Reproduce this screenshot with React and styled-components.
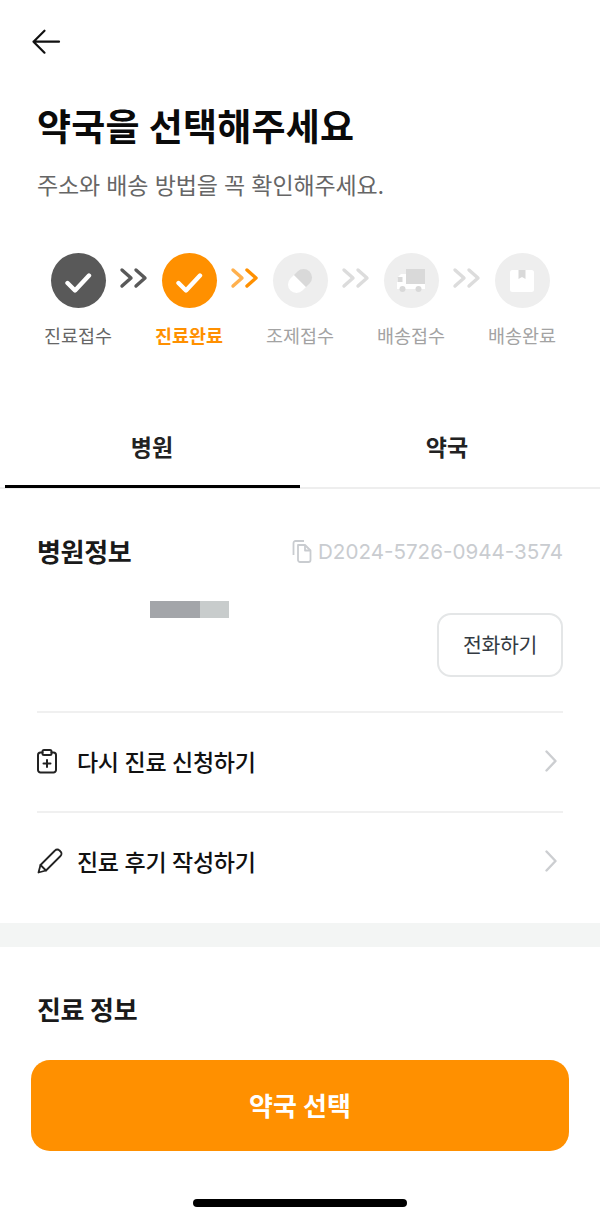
import React from 'react';
import styled, { createGlobalStyle } from 'styled-components';

const GlobalStyle = createGlobalStyle`
  html, body {
    margin: 0;
    padding: 0;
    background: #fff;
  }
  * {
    box-sizing: border-box;
  }
`;

const Page = styled.div`
  width: 600px;
  height: 1218px;
  overflow: hidden;
  display: flex;
  flex-direction: column;
  background: #fff;
  color: #111;
  font-family: Inter, 'Noto Sans CJK KR', sans-serif;
`;

const BackButton = styled.div`
  height: 103px;
  padding: 26px 0 0 31px;
`;

const Header = styled.div`
  padding: 0 37px;
  height: 131px;
`;

const Title = styled.h1`
  margin: 0;
  font-size: 37px;
  line-height: 50px;
  font-weight: 700;
  letter-spacing: 0.2px;
  color: #0a0a0a;
`;

const Subtitle = styled.p`
  margin: 17px 0 0;
  font-size: 23px;
  line-height: 32px;
  font-weight: 400;
  letter-spacing: -0.15px;
  color: #666;
`;

const Stepper = styled.div`
  height: 170px;
  padding-top: 19px;
  display: flex;
  justify-content: center;
`;

const Step = styled.div`
  width: 111px;
  display: flex;
  flex-direction: column;
  align-items: center;
  position: relative;
`;

const Circle = styled.div`
  width: 55px;
  height: 55px;
  border-radius: 50%;
  background: ${(p) => p.$bg};
  display: flex;
  align-items: center;
  justify-content: center;
`;

const StepLabel = styled.span`
  margin-top: 15px;
  font-size: 18.5px;
  line-height: 26px;
  letter-spacing: 0;
  white-space: nowrap;
  font-weight: ${(p) => (p.$active ? 700 : 400)};
  color: ${(p) => p.$color};
`;

const ArrowSlot = styled.div`
  position: absolute;
  left: 96px;
  top: 13px;
`;

const Tabs = styled.div`
  display: flex;
  height: 85px;
  padding: 0 5px;
  border-bottom: 2px solid #eeeeee;
`;

const Tab = styled.div`
  flex: 1;
  display: flex;
  align-items: center;
  justify-content: center;
  padding: 2px 1px 0 0;
  margin-bottom: -1px;
  font-size: 23px;
  font-weight: 700;
  color: #222;
  border-bottom: 3px solid ${(p) => (p.$active ? '#000' : 'transparent')};
`;

const HospitalSection = styled.section`
  padding: 0 37px;
  display: flex;
  flex-direction: column;
`;

const SectionHead = styled.div`
  height: 124px;
  padding-top: 44px;
  display: flex;
  justify-content: space-between;
  align-items: flex-start;
`;

const SectionTitle = styled.h2`
  margin: 0;
  font-size: 26px;
  line-height: 36px;
  font-weight: 700;
  letter-spacing: -0.3px;
  color: #1a1a1a;
`;

const HeadTitle = styled(SectionTitle)`
  margin-top: 2px;
`;

const CodeWrap = styled.div`
  display: flex;
  align-items: center;
  gap: 6px;
  height: 36px;
  font-size: 20.6px;
  color: #c9ccd0;
`;

const InfoBlock = styled.div`
  height: 98px;
  display: flex;
  justify-content: space-between;
  align-items: flex-start;
  position: relative;
`;

const Redacted = styled.div`
  display: flex;
  margin: -12px 0 0 113px;
  height: 17px;
`;

const RedactedBar = styled.div`
  width: ${(p) => p.$w}px;
  background: ${(p) => p.$bg};
`;

const CallButton = styled.div`
  width: 126px;
  height: 64px;
  padding-bottom: 2px;
  border: 2px solid #e4e6e7;
  border-radius: 14px;
  display: flex;
  align-items: center;
  justify-content: center;
  font-size: 20.5px;
  color: #333a42;
  letter-spacing: -0.3px;
`;

const LinkRow = styled.div`
  height: 100px;
  display: flex;
  align-items: center;
  padding: 0 6px 2px 0;
  border-top: 2px solid #f0f0f0;
`;

const RowIcon = styled.div`
  width: 40px;
  display: flex;
  align-items: center;
`;

const RowText = styled.span`
  flex: 1;
  font-size: 23px;
  font-weight: 500;
  letter-spacing: -0.3px;
  color: #111;
`;

const GapBar = styled.div`
  height: 24px;
  margin-top: 12px;
  background: #f3f5f4;
`;

const InfoSection = styled.section`
  flex: 1;
  padding: 46px 37px 0;
`;

const Footer = styled.div`
  padding: 0 31px;
`;

const PrimaryButton = styled.div`
  height: 91px;
  border-radius: 19px;
  background: #ff9000;
  color: #fff;
  font-size: 26px;
  font-weight: 700;
  padding-bottom: 3px;
  display: flex;
  align-items: center;
  justify-content: center;
`;

const HomeBar = styled.div`
  width: 214px;
  height: 8px;
  margin: 48px auto 11px;
  border-radius: 4px;
  background: #000;
`;

const Check = () => (
  <svg width="28" height="26" viewBox="0 0 28 26" fill="none">
    <path d="M3.5 15L11 22.5L25 7.5" stroke="#fff" strokeWidth="4.4" strokeLinecap="round" strokeLinejoin="round" />
  </svg>
);

const Pill = () => (
  <svg width="30" height="30" viewBox="0 0 30 30">
    <g transform="rotate(-45 15 15)">
      <path d="M15 6.5H10a8.5 8.5 0 0 0 0 17H15z" fill="#fff" />
      <path d="M15 6.5H20a8.5 8.5 0 0 1 0 17H15z" fill="#d9d9d9" />
    </g>
  </svg>
);

const Truck = () => (
  <svg width="28" height="24" viewBox="0 0 28 24">
    <rect x="9" y="0" width="19" height="15" fill="#d9d9d9" />
    <path d="M0 9L4 5H9V15H28V20H0z" fill="#fff" />
    <rect x="0.5" y="8" width="5" height="5" fill="#d9d9d9" />
    <circle cx="5.5" cy="20" r="3" fill="#d9d9d9" />
    <circle cx="21.5" cy="20" r="3" fill="#d9d9d9" />
  </svg>
);

const Box = () => (
  <svg width="24" height="22" viewBox="0 0 24 22">
    <rect width="24" height="22" rx="2.5" fill="#fff" />
    <path d="M8.5 0H15.5V9L12 7L8.5 9z" fill="#d9d9d9" />
  </svg>
);

const Chevrons = ({ first, second }) => (
  <svg width="30" height="24" viewBox="0 0 30 24" fill="none" strokeWidth="3.4" strokeLinecap="round" strokeLinejoin="round">
    <path d="M3 4L12 12L3 20" stroke={first} />
    <path d="M17 4L26 12L17 20" stroke={second} />
  </svg>
);

const BackArrow = () => (
  <svg width="30" height="30" viewBox="0 0 30 30" fill="none" stroke="#111" strokeWidth="2.2" strokeLinecap="round" strokeLinejoin="round">
    <path d="M2.5 15.7H28M13.5 4.7L2.5 15.7L13.5 26.7" />
  </svg>
);

const CopyIcon = () => (
  <svg width="20" height="23" viewBox="0 0 20 23" fill="none" stroke="#c9ccd0" strokeWidth="1.8" strokeLinejoin="round">
    <path d="M1.5 15V3a2 2 0 0 1 2-2H12" />
    <path d="M6 5h7l5.5 5.5V20a2 2 0 0 1-2 2H8a2 2 0 0 1-2-2z" />
    <path d="M13 5v5.5h5.5" />
  </svg>
);

const ClipboardPlus = () => (
  <svg width="20" height="25" viewBox="0 0 20 25" fill="none" stroke="#222" strokeWidth="2" strokeLinecap="round" strokeLinejoin="round">
    <path d="M5.5 3.5H3.5a2.5 2.5 0 0 0-2.5 2.5V21a2.5 2.5 0 0 0 2.5 2.5h13A2.5 2.5 0 0 0 19 21V6a2.5 2.5 0 0 0-2.5-2.5h-2" />
    <rect x="5.5" y="1" width="9" height="5" rx="1.5" />
    <path d="M10 11v7M6.5 14.5h7" />
  </svg>
);

const Pencil = () => (
  <svg width="26" height="26" viewBox="0 0 26 26" fill="none" stroke="#222" strokeWidth="1.8" strokeLinecap="round" strokeLinejoin="round">
    <path d="M1.5 24.5L3.5 17L18 2.5a3 3 0 0 1 4.5 0l1 1a3 3 0 0 1 0 4.5L9 22.5z" />
    <path d="M3.5 17L9 22.5" />
  </svg>
);

const Chevron = () => (
  <svg width="12" height="22" viewBox="0 0 12 22" fill="none" stroke="#ccced1" strokeWidth="2.4" strokeLinecap="round" strokeLinejoin="round">
    <path d="M1.5 1.5L10.5 11L1.5 20.5" />
  </svg>
);

const steps = [
  { label: '진료접수', bg: '#595959', color: '#666', icon: <Check />, arrows: ['#595959', '#595959'] },
  { label: '진료완료', bg: '#ff9000', color: '#ff9000', active: true, icon: <Check />, arrows: ['#ffb04d', '#ff9000'] },
  { label: '조제접수', bg: '#eeeeee', color: '#a3a3a3', icon: <Pill />, arrows: ['#dcdcdc', '#dcdcdc'] },
  { label: '배송접수', bg: '#eeeeee', color: '#a3a3a3', icon: <Truck />, arrows: ['#dcdcdc', '#dcdcdc'] },
  { label: '배송완료', bg: '#eeeeee', color: '#a3a3a3', icon: <Box /> },
];

const App = () => {
  return (
    <Page>
      <GlobalStyle />
      <BackButton>
        <BackArrow />
      </BackButton>
      <Header>
        <Title>약국을 선택해주세요</Title>
        <Subtitle>주소와 배송 방법을 꼭 확인해주세요.</Subtitle>
      </Header>
      <Stepper>
        {steps.map((step) => (
          <Step key={step.label}>
            <Circle $bg={step.bg}>{step.icon}</Circle>
            <StepLabel $color={step.color} $active={step.active}>
              {step.label}
            </StepLabel>
            {step.arrows && (
              <ArrowSlot>
                <Chevrons first={step.arrows[0]} second={step.arrows[1]} />
              </ArrowSlot>
            )}
          </Step>
        ))}
      </Stepper>
      <Tabs>
        <Tab $active>병원</Tab>
        <Tab>약국</Tab>
      </Tabs>
      <HospitalSection>
        <SectionHead>
          <HeadTitle>병원정보</HeadTitle>
          <CodeWrap>
            <CopyIcon />
            D2024-5726-0944-3574
          </CodeWrap>
        </SectionHead>
        <InfoBlock>
          <Redacted>
            <RedactedBar $w={50} $bg="#a3a5a9" />
            <RedactedBar $w={29} $bg="#c8cccc" />
          </Redacted>
          <CallButton>전화하기</CallButton>
        </InfoBlock>
        <LinkRow>
          <RowIcon>
            <ClipboardPlus />
          </RowIcon>
          <RowText>다시 진료 신청하기</RowText>
          <Chevron />
        </LinkRow>
        <LinkRow>
          <RowIcon>
            <Pencil />
          </RowIcon>
          <RowText>진료 후기 작성하기</RowText>
          <Chevron />
        </LinkRow>
      </HospitalSection>
      <GapBar />
      <InfoSection>
        <SectionTitle>진료 정보</SectionTitle>
      </InfoSection>
      <Footer>
        <PrimaryButton>약국 선택</PrimaryButton>
      </Footer>
      <HomeBar />
    </Page>
  );
};

export default App;
